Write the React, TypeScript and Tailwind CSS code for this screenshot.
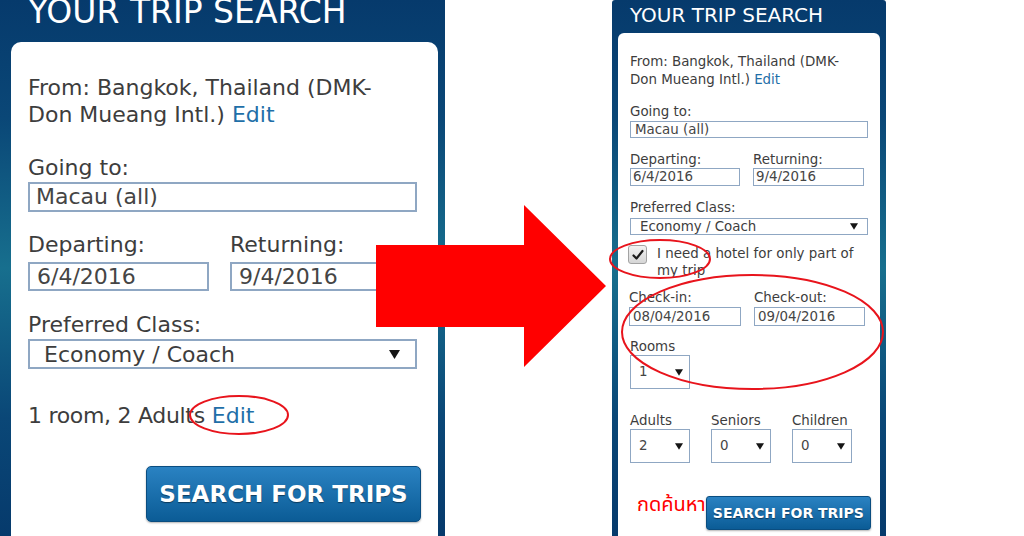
import React from 'react';

const frameBg =
  'bg-[linear-gradient(to_bottom,#063a6c_0%,#0a4777_22%,#176f8e_50%,#0a4777_78%,#063a6c_100%)]';

function Caret({ className }: { className?: string }) {
  return (
    <svg viewBox="0 0 10 8" className={className}>
      <polygon points="0,0 10,0 5,8" fill="#151515" />
    </svg>
  );
}

// collapsed version of the search box (the big one on the left)
function BigPanel() {
  return (
    <div className={`w-[445px] h-full shrink-0 flex flex-col pl-[11px] pr-[7px] ${frameBg}`}>
      <div className="h-[42px] shrink-0 pl-[17px]">
        <div className="-mt-[4px] text-[33px] leading-[32px] text-white whitespace-nowrap">YOUR TRIP SEARCH</div>
      </div>
      <div className="flex-1 flex flex-col bg-white rounded-t-[10px] pt-[32px] pl-[17px] pr-[21px] text-[22px] leading-[27px] text-[#3d3d3d]">
        <p className="whitespace-nowrap">
          From: Bangkok, Thailand (DMK-
          <br />
          Don Mueang Intl.) <span className="text-[#1f6fa8]">Edit</span>
        </p>

        <p className="mt-[26px]">Going to:</p>
        <div className="mt-[1px] h-[30px] border-2 border-[#8fa7c3] pl-[6px] leading-[26px] text-[#454545]">Macau (all)</div>

        <div className="mt-[19px] flex gap-[21px]">
          <div className="w-[181px]">
            <p>Departing:</p>
            <div className="mt-[4px] h-[29px] border-2 border-[#8fa7c3] pl-[7px] leading-[25px] text-[#454545]">6/4/2016</div>
          </div>
          <div className="w-[181px]">
            <p>Returning:</p>
            <div className="mt-[4px] h-[29px] border-2 border-[#8fa7c3] pl-[7px] leading-[25px] text-[#454545]">9/4/2016</div>
          </div>
        </div>

        <p className="mt-[20px]">Preferred Class:</p>
        <div className="mt-[1px] h-[30px] border-2 border-[#8fa7c3] pl-[14px] pr-[15px] flex items-center justify-between text-[#3d3d3d]">
          <span>Economy / Coach</span>
          <Caret className="w-[11px] h-[9px]" />
        </div>

        <p className="mt-[33px] whitespace-nowrap">
          <span className="tracking-[-0.3px]">1 room, 2 Adults</span> <span className="text-[#1f6fa8]">Edit</span>
        </p>

        <button className="mt-[37px] ml-[118px] w-[275px] h-[56px] rounded-[5px] border border-[#0a4d80] bg-[linear-gradient(to_bottom,#2a82c2,#0b5c96)] text-white font-bold text-[23px] [text-shadow:0_1px_1px_rgba(0,0,0,0.45)] shadow-[0_1px_2px_rgba(0,0,0,0.3)]">
          SEARCH FOR TRIPS
        </button>
      </div>
    </div>
  );
}

function Field({ label, value, w }: { label: string; value: string; w: string }) {
  return (
    <div className={w}>
      <p className="leading-[16px]">{label}</p>
      <div className="mt-[1px] h-[19px] border border-[#8fa7c3] pl-[3px] leading-[17px] text-[#454545]">{value}</div>
    </div>
  );
}

function Dropdown({ label, value }: { label: string; value: string }) {
  return (
    <div className="w-[60px]">
      <p className="leading-[16px]">{label}</p>
      <div className="h-[34px] border border-[#8fa7c3] pl-[8px] pr-[6px] flex items-center justify-between text-[#454545]">
        <span>{value}</span>
        <Caret className="w-[8px] h-[7px]" />
      </div>
    </div>
  );
}

// expanded version with the hotel options
function SmallPanel() {
  return (
    <div className={`w-[274px] h-full shrink-0 flex flex-col px-[6px] rounded-t-[3px] ${frameBg}`}>
      <div className="h-[33px] shrink-0 pl-[12px] pt-[5px]">
        <div className="text-[20px] leading-[20px] text-white whitespace-nowrap">YOUR TRIP SEARCH</div>
      </div>
      <div className="flex-1 flex flex-col bg-white rounded-t-[6px] pt-[20px] px-[12px] text-[13.4px] leading-[18px] text-[#3d3d3d]">
        <p className="whitespace-nowrap">
          From: Bangkok, Thailand (DMK-
          <br />
          Don Mueang Intl.) <span className="text-[#1f6fa8]">Edit</span>
        </p>

        <p className="mt-[15px] leading-[16px]">Going to:</p>
        <div className="mt-[1px] h-[17px] border border-[#8fa7c3] pl-[4px] leading-[15px] text-[#454545]">Macau (all)</div>

        <div className="mt-[14px] flex gap-[13px]">
          <div className="w-[110px]">
            <p className="leading-[16px]">Departing:</p>
            <div className="h-[18px] border border-[#8fa7c3] pl-[2px] leading-[16px] text-[#454545]">6/4/2016</div>
          </div>
          <div className="w-[111px]">
            <p className="leading-[16px]">Returning:</p>
            <div className="h-[18px] border border-[#8fa7c3] pl-[2px] leading-[16px] text-[#454545]">9/4/2016</div>
          </div>
        </div>

        <p className="mt-[14px] leading-[16px]">Preferred Class:</p>
        <div className="mt-[2px] h-[17px] border border-[#8fa7c3] pl-[9px] pr-[9px] flex items-center justify-between">
          <span className="leading-[15px]">Economy / Coach</span>
          <Caret className="w-[8px] h-[7px]" />
        </div>

        <div className="mt-[10px] flex items-start gap-[10px] -ml-[2px]">
          <div className="w-[19px] h-[19px] shrink-0 rounded-[3px] border border-[#a3a3a3] bg-[linear-gradient(to_bottom,#f2f2f2,#d6d6d6)] flex items-center justify-center">
            <svg viewBox="0 0 12 12" className="w-[12px] h-[12px]">
              <path d="M1.5 6.5 L4.5 9.5 L10.5 2" fill="none" stroke="#1a1a1a" strokeWidth="2.2" strokeLinecap="round" strokeLinejoin="round" />
            </svg>
          </div>
          <p className="leading-[17px]">
            I need a hotel for only part of
            <br />
            my trip
          </p>
        </div>

        <div className="mt-[11px] flex gap-[13px] -ml-[1px]">
          <Field label="Check-in:" value="08/04/2016" w="w-[112px]" />
          <Field label="Check-out:" value="09/04/2016" w="w-[111px]" />
        </div>

        <div className="mt-[13px]">
          <Dropdown label="Rooms" value="1" />
        </div>

        <div className="mt-[24px] flex gap-[21px]">
          <Dropdown label="Adults" value="2" />
          <Dropdown label="Seniors" value="0" />
          <Dropdown label="Children" value="0" />
        </div>

        <div className="mt-[33px] flex items-start -mr-[3px]">
          <span className="ml-[7px] -mt-[3px] text-[20px] leading-[24px] text-[#ff0000] whitespace-nowrap font-['Noto_Sans_Thai','DejaVu_Sans',sans-serif]">
            กดค้นหา
          </span>
          <button className="ml-auto w-[169px] h-[34px] rounded-[3px] border border-[#0a4d80] bg-[linear-gradient(to_bottom,#2a82c2,#0b5c96)] text-white font-bold text-[14px] [text-shadow:0_1px_1px_rgba(0,0,0,0.45)] shadow-[0_1px_2px_rgba(0,0,0,0.3)]">
            SEARCH FOR TRIPS
          </button>
        </div>
      </div>
    </div>
  );
}

export default function App() {
  return (
    <div className="relative w-[1024px] h-[536px] overflow-hidden bg-white flex font-['DejaVu_Sans',Verdana,sans-serif]">
      <BigPanel />
      <div className="w-[167px] shrink-0" />
      <SmallPanel />

      {/* red annotations drawn over the screenshots */}
      <svg className="absolute inset-0 pointer-events-none" width="1024" height="536" viewBox="0 0 1024 536">
        <polygon points="376,245 524,245 524,205 606,286 524,367 524,327 376,327" fill="#ff0000" />
        <ellipse cx="239" cy="415" rx="49" ry="19" fill="none" stroke="#e8141c" strokeWidth="2" />
        <ellipse cx="660" cy="259" rx="50" ry="19" fill="none" stroke="#e8141c" strokeWidth="2" />
        <ellipse cx="752.5" cy="332" rx="130.5" ry="57" fill="none" stroke="#e8141c" strokeWidth="2" />
      </svg>
    </div>
  );
}
